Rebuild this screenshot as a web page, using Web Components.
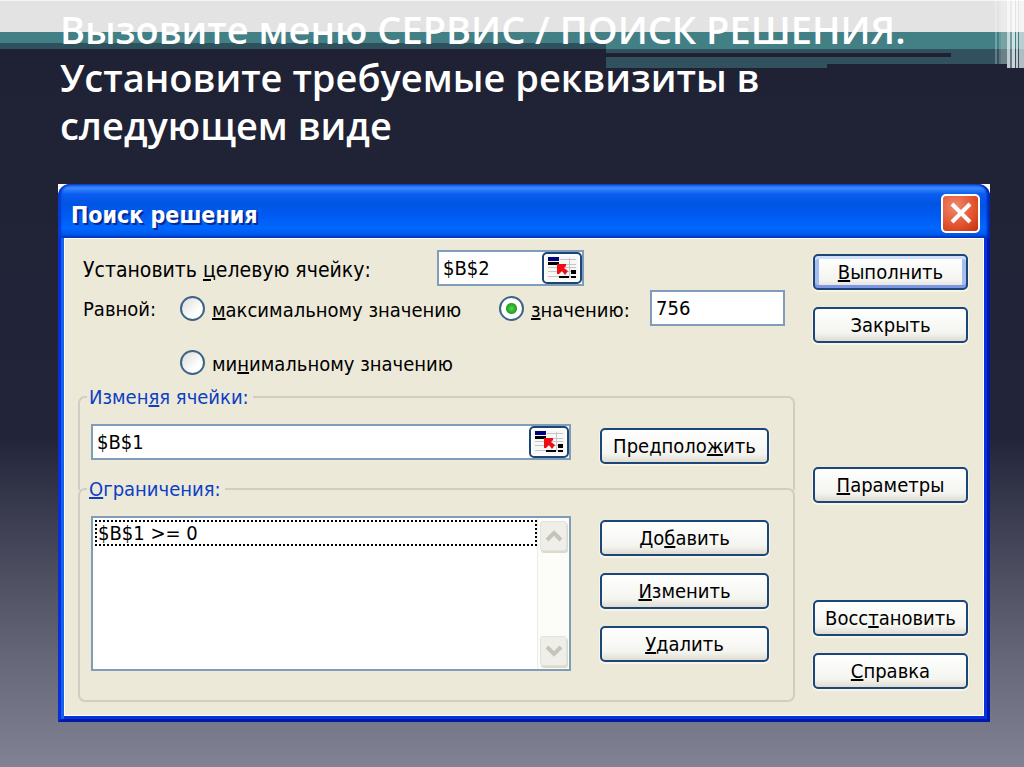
<!DOCTYPE html>
<html lang="ru">
<head>
<meta charset="utf-8">
<title>Поиск решения</title>
<style>
html, body { margin: 0; }
body { font-family: "DejaVu Sans Condensed", "DejaVu Sans", sans-serif; background: #1f2133; }
</style>
</head>
<body>
<slide-page>
  <slide-heading slot="heading">Вызовите меню СЕРВИС / ПОИСК РЕШЕНИЯ. Установите требуемые реквизиты в следующем виде</slide-heading>
  <solver-dialog></solver-dialog>
</slide-page>

<script>
const define = (name, html) => {
  const template = document.createElement('template');
  template.innerHTML = html;
  customElements.define(name, class extends HTMLElement {
    constructor() {
      super();
      const root = this.attachShadow({ mode: 'open' });
      root.append(template.content.cloneNode(true));
      const input = root.querySelector('input[type=text]');
      if (input) {
        input.value = this.getAttribute('value') || '';
        if (this.hasAttribute('label')) input.setAttribute('aria-label', this.getAttribute('label'));
      }
      const radio = root.querySelector('input[type=radio]');
      if (radio) radio.checked = this.hasAttribute('checked');
    }
  });
};

define('slide-art', `
<style>
  :host { display: block; height: 68px; }
  svg { display: block; width: 100%; height: 100%; }
</style>
<svg viewBox="0 0 1024 68" preserveAspectRatio="none" shape-rendering="crispEdges" aria-hidden="true">
  <rect width="1024" height="32" fill="#e3e3e3"/>
  <rect width="1024" height="1" fill="#f6f6f6"/>
  <rect y="32" width="1024" height="17" fill="#438086"/>
  <rect y="43" width="606" height="6" fill="#2f505d"/>
  <rect x="606" y="49" width="418" height="15" fill="#31515e"/>
  <rect x="606" y="64" width="221" height="4" fill="#31515e"/>
  <rect x="606" y="53" width="345" height="4" fill="#1f2133"/>
  <rect x="1007" y="64" width="17" height="4" fill="#31515e"/>
  <g fill="#fff">
    <rect x="995" width="2" height="64" opacity=".25"/>
    <rect x="999" width="2" height="64" opacity=".2"/>
    <rect x="1001" width="6" height="64" opacity=".28"/>
    <rect x="1007" width="3" height="68" opacity=".7"/>
    <rect x="1010" width="2" height="68" opacity=".25"/>
    <rect x="1012" width="3" height="68" opacity=".75"/>
    <rect x="1016" width="2" height="68" opacity=".7"/>
    <rect x="1019" width="5" height="68" opacity=".62"/>
  </g>
</svg>`);

define('slide-heading', `
<style>
  :host { display: block; }
  h1 { margin: 0; font: 600 38px/48px "Open Sans", sans-serif; color: #fff; }
</style>
<h1><slot></slot></h1>`);

define('slide-page', `
<style>
  :host {
    display: block; position: relative; box-sizing: border-box; min-height: 100vh;
    padding: 5px 34px 44px 58px;
    background: linear-gradient(#1f2133, #22243a 57%, #4b4c5e 74%, #68697b 87%, #828295);
  }
  slide-art { position: absolute; top: 0; left: 0; right: 0; }
  header { position: relative; min-height: 179px; padding: 0 70px 0 2px; box-sizing: border-box; }
  main { position: relative; }
</style>
<slide-art></slide-art>
<header><slot name="heading"></slot></header>
<main><slot></slot></main>`);

define('xp-button', `
<style>
  :host { display: block; }
  button {
    display: block; width: 100%; height: 36px; padding: 0; margin: 0; box-sizing: border-box;
    border: 2px solid #1d4678; border-radius: 5px;
    background: linear-gradient(#fff, #f4f4f0 75%, #dfdcd0);
    font: 20px/26px "DejaVu Sans Condensed", "DejaVu Sans", sans-serif; color: #000;
    box-shadow: 0 1px 0 1px #f7f5ea;
  }
  :host([default]) button { box-shadow: 0 1px 0 1px #f7f5ea, inset 0 3px #cee0fc, inset 0 -3px #7d97e4, inset 4px 0 #a6bdf2, inset -4px 0 #a6bdf2; }
</style>
<button type="button"><slot></slot></button>`);

define('xp-field', `
<style>
  :host { display: block; }
  label { display: none; font-size: 21px; line-height: 26px; padding-top: 4px; }
  :host([captioned]) { display: grid; grid-template-columns: 354px 147px; align-items: center; }
  :host([captioned]) label { display: block; }
  .box { display: flex; align-items: center; height: 36px; box-sizing: border-box; border: 2px solid #7f9db9; background: #fff; }
  input {
    flex: 1; min-width: 0; padding: 0 0 0 4px; border: 0; outline: 0; background: none;
    font: 20px/26px "DejaVu Sans Condensed", "DejaVu Sans", sans-serif; color: #000;
  }
  button { display: none; width: 40px; height: 32px; padding: 0; box-sizing: border-box; border: 2px solid #1d4678; border-radius: 5px; background: #f7f7f5; box-shadow: inset 0 0 0 2px #fff; }
  :host([picker]) button { display: grid; place-items: center; }
  svg { display: block; }
</style>
<label for="value"><slot></slot></label>
<div class="box">
  <input type="text" id="value">
  <button type="button" aria-label="Выбрать ячейку">
    <svg width="28" height="22" viewBox="0 0 28 22" aria-hidden="true">
      <path shape-rendering="crispEdges" d="M0 10H28M0 14H28M0 19H28M12 2H28M21 1V20M12 7H28" stroke="#c8c5c8" fill="none"/>
      <path d="M0 0H11V4H0Z" fill="#000080"/>
      <path d="M0 5H11V8H0ZM23 13H28V17H23ZM11 19H21V21H11ZM23 19H28V21H23Z" fill="#000"/>
      <path d="M9 7H18V9L16 11L20 14L17 18L14 14L11 17H9Z" fill="#f00c14"/>
    </svg>
  </button>
</div>`);

define('xp-radio', `
<style>
  :host { display: block; }
  label { display: flex; align-items: center; gap: 7px; height: 36px; font-size: 20px; line-height: 26px; white-space: nowrap; }
  span { padding-top: 4px; }
  input {
    appearance: none; flex: none; width: 25px; height: 25px; margin: 0; box-sizing: border-box;
    border: 2px solid #3c6488; border-radius: 50%;
    background: linear-gradient(135deg, #dcdcd8, #fff 70%);
  }
  input:checked { background: radial-gradient(circle, #55d551 0, #21a121 5px, #fff 6px); }
</style>
<label><input type="radio"><span><slot></slot></span></label>`);

define('group-box', `
<style>
  :host { display: block; }
  :host([open]) { margin-bottom: -14px; }
  fieldset {
    display: block; min-width: 0; margin: 0; padding: 14px 24px 29px 11px;
    border: 2px solid #d0cfbf; border-radius: 7px;
  }
  :host([open]) fieldset { padding-bottom: 26px; border-bottom: 0; border-radius: 7px 7px 0 0; }
  legend { height: 26px; margin-left: -4px; padding: 0 4px 0 2px; font-size: 20px; line-height: 26px; color: #0b3fc4; }
  .cols { display: grid; grid-template-columns: 1fr 169px; gap: 29px; }
</style>
<fieldset>
  <legend><slot name="legend"></slot></legend>
  <div class="cols"><slot></slot></div>
</fieldset>`);

define('constraint-list', `
<style>
  :host { display: flex; height: 155px; box-sizing: border-box; border: 2px solid #7f9db9; background: #fff; }
  ul { flex: 1; margin: 0; padding: 2px 0 0 2px; list-style: none; }
  li { box-sizing: border-box; height: 26px; padding-left: 1px; border: 2px dotted #000; font-size: 20px; line-height: 22px; }
  .bar { display: flex; flex-direction: column; justify-content: space-between; width: 32px; box-sizing: border-box; padding: 3px 2px; background: #fcfcf8; border-left: 1px solid #eeede5; }
  button { display: grid; place-items: center; width: 27px; height: 30px; padding: 0; border: 1px solid #e4e2d8; border-radius: 3px; background: #efeee8; box-shadow: 1px 2px #dcdacd; }
</style>
<ul role="listbox" aria-label="Ограничения"><li role="option" aria-selected="true">$B$1 &gt;= 0</li></ul>
<div class="bar">
  <button type="button" aria-label="Вверх"><svg width="18" height="12" viewBox="0 0 18 12"><path d="M2 10L9 3L16 10" fill="none" stroke="#c5c3ba" stroke-width="4"/></svg></button>
  <button type="button" aria-label="Вниз"><svg width="18" height="12" viewBox="0 0 18 12"><path d="M2 2L9 9L16 2" fill="none" stroke="#c5c3ba" stroke-width="4"/></svg></button>
</div>`);

define('title-bar', `
<style>
  :host {
    display: flex; align-items: center; justify-content: space-between; height: 54px; box-sizing: border-box;
    padding: 4px 10px 0 13px; border-radius: 12px 12px 0 0;
    background: linear-gradient(#0b4ae0, #3c8cff 4px, #0a5df0 10px, #0054e3 20px, #005cf5 34px, #0068ff 44px, #005af0 50px, #0038b8);
    box-shadow: inset 3px 0 2px #0838d0, inset -3px 0 2px #0028b8;
  }
  h2 { margin: 0; padding-top: 4px; font: bold 23px/28px "DejaVu Sans Condensed", "DejaVu Sans", sans-serif; color: #fff; text-shadow: 2px 2px #0a2a90; }
  button {
    display: grid; place-items: center; width: 39px; height: 39px; padding: 0; border: 2px solid #fff; border-radius: 5px;
    background: radial-gradient(circle at 35% 30%, #ee8a6c, #e2512c 60%, #bf3210);
  }
</style>
<h2><slot></slot></h2>
<button type="button" aria-label="Закрыть окно"><svg width="22" height="22" viewBox="0 0 22 22"><path d="M2 2L20 20M20 2L2 20" stroke="#fff" stroke-width="4"/></svg></button>`);

define('solver-dialog', `
<style>
  :host { display: block; background: linear-gradient(#fff 9px, #0b3fd8 9px); }
  form {
    display: grid; grid-template-columns: 1fr 155px; gap: 18px; margin: 0;
    padding: 12px 19px 17px 17px;
    border: solid; border-width: 0 3px 3px; background: #ece9d8;
    border-color: #0019a8 #0019a8 #0019a8 #0a30d4;
    box-shadow: inset 3px 0 #1460f0, inset -3px -3px #0831d9, inset 4px 1px #fff, inset -4px -4px #fff;
  }
  .target { padding-left: 5px; margin-bottom: 4px; }
  .equal { display: grid; grid-template-columns: 97px 319px 151px 135px; row-gap: 18px; padding-left: 5px; margin-bottom: 4px; }
  .text { font-size: 20px; line-height: 26px; padding-top: 6px; }
  .low { grid-column: 2; }
  .stack { display: grid; gap: 17px; align-content: start; }
  .lead { padding-top: 4px; }
  .side { display: flex; flex-direction: column; padding-top: 4px; }
  .side .mid { margin: 124px 0 97px; }
</style>
<title-bar>Поиск решения</title-bar>
<form>
  <div>
    <div class="target"><xp-field captioned picker value="$B$2">Установить <u>ц</u>елевую ячейку:</xp-field></div>
    <div class="equal">
      <span class="text">Равной:</span>
      <xp-radio><u>м</u>аксимальному значению</xp-radio>
      <xp-radio checked><u>з</u>начению:</xp-radio>
      <xp-field value="756" label="Значение"></xp-field>
      <xp-radio class="low">ми<u>н</u>имальному значению</xp-radio>
    </div>
    <group-box open>
      <span slot="legend">Измен<u>я</u>я ячейки:</span>
      <xp-field picker value="$B$1" label="Изменяя ячейки"></xp-field>
      <xp-button class="lead">Предполо<u>ж</u>ить</xp-button>
    </group-box>
    <group-box>
      <span slot="legend"><u>О</u>граничения:</span>
      <constraint-list></constraint-list>
      <div class="stack lead">
        <xp-button>До<u>б</u>авить</xp-button>
        <xp-button><u>И</u>зменить</xp-button>
        <xp-button><u>У</u>далить</xp-button>
      </div>
    </group-box>
  </div>
  <div class="side">
    <div class="stack"><xp-button default><u>В</u>ыполнить</xp-button><xp-button>Закрыть</xp-button></div>
    <xp-button class="mid"><u>П</u>араметры</xp-button>
    <div class="stack"><xp-button>Восс<u>т</u>ановить</xp-button><xp-button><u>С</u>правка</xp-button></div>
  </div>
</form>`);
</script>
</body>
</html>
